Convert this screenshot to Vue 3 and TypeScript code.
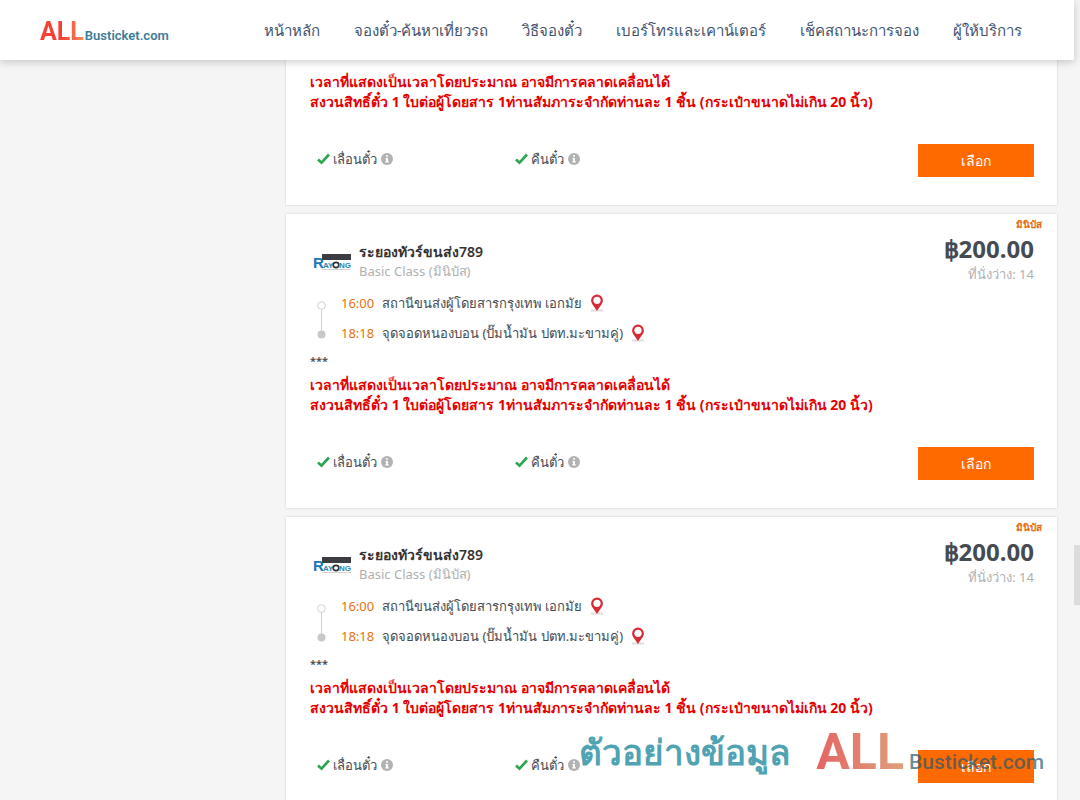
<script setup lang="ts">
interface Stop { time: string; place: string }
interface Trip {
  id: number
  details: boolean
  operator: string
  vehicle: string
  price: string
  seats: number
  stops: Stop[]
}

const menu: string[] = [
  'หน้าหลัก',
  'จองตั๋ว-ค้นหาเที่ยวรถ',
  'วิธีจองตั๋ว',
  'เบอร์โทรและเคาน์เตอร์',
  'เช็คสถานะการจอง',
  'ผู้ให้บริการ',
]

const stops: Stop[] = [
  { time: '16:00', place: 'สถานีขนส่งผู้โดยสารกรุงเทพ เอกมัย' },
  { time: '18:18', place: 'จุดจอดหนองบอน (ปั๊มน้ำมัน ปตท.มะขามคู่)' },
]

const trips: Trip[] = [1, 2, 3].map((id) => ({
  id,
  details: id > 1,
  operator: 'ระยองทัวร์ขนส่ง789',
  vehicle: 'มินิบัส',
  price: '฿200.00',
  seats: 14,
  stops,
}))

const policies: string[] = ['เลื่อนตั๋ว', 'คืนตั๋ว']
</script>

<template>
  <div class="page">
    <header class="topbar">
      <a class="brand" href="#"><span class="brand-all">ALL</span><span class="brand-name">Busticket.com</span></a>
      <nav class="menu">
        <a v-for="item in menu" :key="item" href="#">{{ item }}</a>
      </nav>
    </header>

    <main class="results">
      <article v-for="trip in trips" :key="trip.id" class="card">
        <template v-if="trip.details">
          <div class="vehicle-tag">{{ trip.vehicle }}</div>
          <div class="head">
            <svg class="operator-logo" viewBox="0 0 40 18" role="img" aria-label="Rayong">
              <rect x="9" y="0" width="29" height="6" fill="#3b3d40" />
              <text x="0" y="14" font-size="15" class="logo-text" fill="#1879b8">R</text>
              <text x="10" y="14" font-size="8" class="logo-text" fill="#2b87b5">AY</text>
              <ellipse cx="23" cy="11" rx="2.800" ry="2.600" fill="#fff" stroke="#333" stroke-width="1.600" />
              <text x="26" y="14" font-size="8" class="logo-text" fill="#2b87b5">NG</text>
              <path d="M9 15.500H38" stroke="#d4d4d4" />
            </svg>
            <div class="operator">
              <h3>{{ trip.operator }}</h3>
              <p>Basic Class ({{ trip.vehicle }})</p>
            </div>
            <div class="fare">
              <strong>{{ trip.price }}</strong>
              <span>ที่นั่งว่าง: {{ trip.seats }}</span>
            </div>
          </div>
          <div class="route">
            <svg class="track" viewBox="0 0 9 38" aria-hidden="true">
              <path d="M4.500 8V30" stroke="#d2d2d2" />
              <circle cx="4.500" cy="4.500" r="3.800" fill="#fff" stroke="#d2d2d2" />
              <circle cx="4.500" cy="33.500" r="4" fill="#c8c8c8" />
            </svg>
            <ul>
              <li v-for="stop in trip.stops" :key="stop.time">
                <time>{{ stop.time }}</time>
                <span>{{ stop.place }}</span>
                <svg class="pin" viewBox="0 0 14 18" aria-hidden="true">
                  <rect x="1" y="15.500" width="12" height="2" fill="#dedede" />
                  <path d="M7 0.500A5.900 5.900 0 0 0 1.100 6.400C1.100 9.500 4 12 7 17C10 12 12.900 9.500 12.900 6.400A5.900 5.900 0 0 0 7 0.500Z" fill="#d92b34" />
                  <circle cx="7" cy="6.300" r="3.600" fill="#fff" />
                </svg>
              </li>
            </ul>
          </div>
          <p class="stars">***</p>
        </template>
        <p class="warning">
          เวลาที่แสดงเป็นเวลาโดยประมาณ อาจมีการคลาดเคลื่อนได้<br />
          สงวนสิทธิ์ตั๋ว 1 ใบต่อผู้โดยสาร 1ท่านสัมภาระจำกัดท่านละ 1 ชิ้น (กระเป๋าขนาดไม่เกิน 20 นิ้ว)
        </p>
        <footer class="actions">
          <div v-for="policy in policies" :key="policy" class="policy">
            <svg class="tick" viewBox="0 0 13 12" aria-hidden="true">
              <path d="M1 6.500L4.500 9.700L12 1.500" fill="none" stroke="#2da44e" stroke-width="2.600" />
            </svg>
            <span>{{ policy }}</span>
            <svg class="info" viewBox="0 0 12 12" aria-hidden="true">
              <circle cx="6" cy="6" r="6" fill="#b2b2b2" />
              <path d="M5 2.200H7V3.800H5ZM4.500 5H7V8.300H7.800V9.500H4.300V8.300H5.100V6.200H4.500Z" fill="#fff" />
            </svg>
          </div>
          <button type="button">เลือก</button>
        </footer>
      </article>
    </main>

    <div class="scroll-thumb"></div>
    <div class="watermark">
      <span class="sample">ตัวอย่างข้อมูล</span>
      <div class="mark">
        <span class="mark-all">ALL</span>
        <span class="mark-name">Busticket.com</span>
      </div>
    </div>
  </div>
</template>

<style>
body { margin: 0; background: #f5f5f5; }
</style>

<style scoped>
* { box-sizing: border-box; }
h3, p, ul { margin: 0; padding: 0; }
.page {
  position: relative;
  height: 100vh;
  overflow: hidden;
  background: #f5f5f5;
  color: #444b52;
  font-family: "Noto Sans", "Open Sans", sans-serif;
  font-size: 13px;
}
.topbar {
  position: relative;
  z-index: 2;
  display: flex;
  align-items: center;
  height: 60px;
  margin-right: 6px;
  padding: 0 52px 0 40px;
  background: #fff;
  box-shadow: 0 2px 8px rgba(0, 0, 0, 0.2);
}
.brand {
  display: flex;
  align-items: baseline;
  gap: 1px;
  padding-top: 8px;
  text-decoration: none;
  font-family: Roboto, sans-serif;
  line-height: 24px;
}
.brand-all {
  font-size: 25px;
  font-weight: 700;
  color: transparent;
  background: linear-gradient(90deg, #f64036, #f64036 50%, #f88c56);
  background-clip: text;
}
.brand-name { font-size: 13px; font-weight: 600; color: #3b7c99; }
.menu {
  display: flex;
  flex: 1;
  justify-content: space-between;
  margin-left: 95px;
}
.menu a {
  color: #42526e;
  font-size: 15px;
  line-height: 24px;
  text-decoration: none;
  white-space: nowrap;
}
.results {
  display: flex;
  flex-direction: column;
  gap: 9px;
  margin: 0 23px 0 286px;
}
.card {
  flex: none;
  padding: 0 23px 28px 24px;
  background: #fff;
  box-shadow: 0 0 2px rgba(0, 0, 0, 0.18);
}
.card:first-child { padding-top: 12px; }
.vehicle-tag {
  height: 28px;
  margin-right: -8px;
  padding-top: 2px;
  text-align: right;
  font-size: 10px;
  line-height: 16px;
  font-weight: 700;
  color: #e56a10;
}
.head { display: flex; height: 46px; }
.operator-logo { flex: none; width: 40px; height: 18px; margin: 12px 6px 0 3px; }
.logo-text { font-family: "Liberation Sans", sans-serif; font-weight: 700; }
.operator { flex: 1; }
.operator h3 { font-size: 14px; line-height: 20px; font-weight: 600; color: #333; }
.operator p { line-height: 18px; color: #b0b0b0; }
.fare { display: flex; flex-direction: column; align-items: flex-end; margin-top: -7px; }
.fare strong { font-size: 24px; line-height: 28px; color: #444b52; }
.fare span { line-height: 22px; color: #b0b0b0; }
.route { display: flex; }
.track { flex: none; width: 9px; height: 38px; margin: 13px 15px 0 7px; }
.route ul { list-style: none; }
.route li { display: flex; align-items: center; height: 30px; }
.route time { width: 41px; color: #e8710f; }
.pin { width: 14px; height: 18px; margin-left: 8px; }
.stars { height: 27px; padding-top: 4px; font-size: 11px; line-height: 18px; font-weight: 600; }
.warning { font-size: 14px; font-weight: 700; line-height: 20px; color: #e60000; }
.actions { display: flex; align-items: flex-start; height: 33px; margin-top: 32px; padding-left: 7px; }
.policy { display: flex; align-items: center; width: 198px; line-height: 30px; }
.tick { width: 13px; height: 12px; margin-right: 3px; }
.info { width: 12px; height: 12px; margin-left: 4px; }
.actions button {
  width: 116px;
  height: 33px;
  margin-left: auto;
  padding: 0;
  border: 0;
  background: #ff6a00;
  color: #fff;
  font: inherit;
  font-size: 14px;
}
.scroll-thumb {
  position: absolute;
  top: 545px;
  right: 0;
  width: 6px;
  height: 60px;
  background: #dcdcdc;
}
.watermark {
  position: absolute;
  right: 36px;
  bottom: 14px;
  z-index: 3;
  display: flex;
  align-items: flex-end;
  font-family: Roboto, sans-serif;
  line-height: 48px;
}
.sample {
  margin-right: 26px;
  padding-bottom: 10px;
  font-family: "Noto Sans", sans-serif;
  font-size: 35px;
  font-weight: 700;
  color: #4fa3b2;
}
.mark { display: flex; align-items: baseline; }
.mark-all {
  margin-right: 5px;
  font-size: 50px;
  font-weight: 700;
  color: transparent;
  background: linear-gradient(90deg, #e46565, #dfa07a);
  background-clip: text;
}
.mark-name { font-size: 21px; font-weight: 500; color: rgba(35, 88, 115, 0.7); }
</style>
